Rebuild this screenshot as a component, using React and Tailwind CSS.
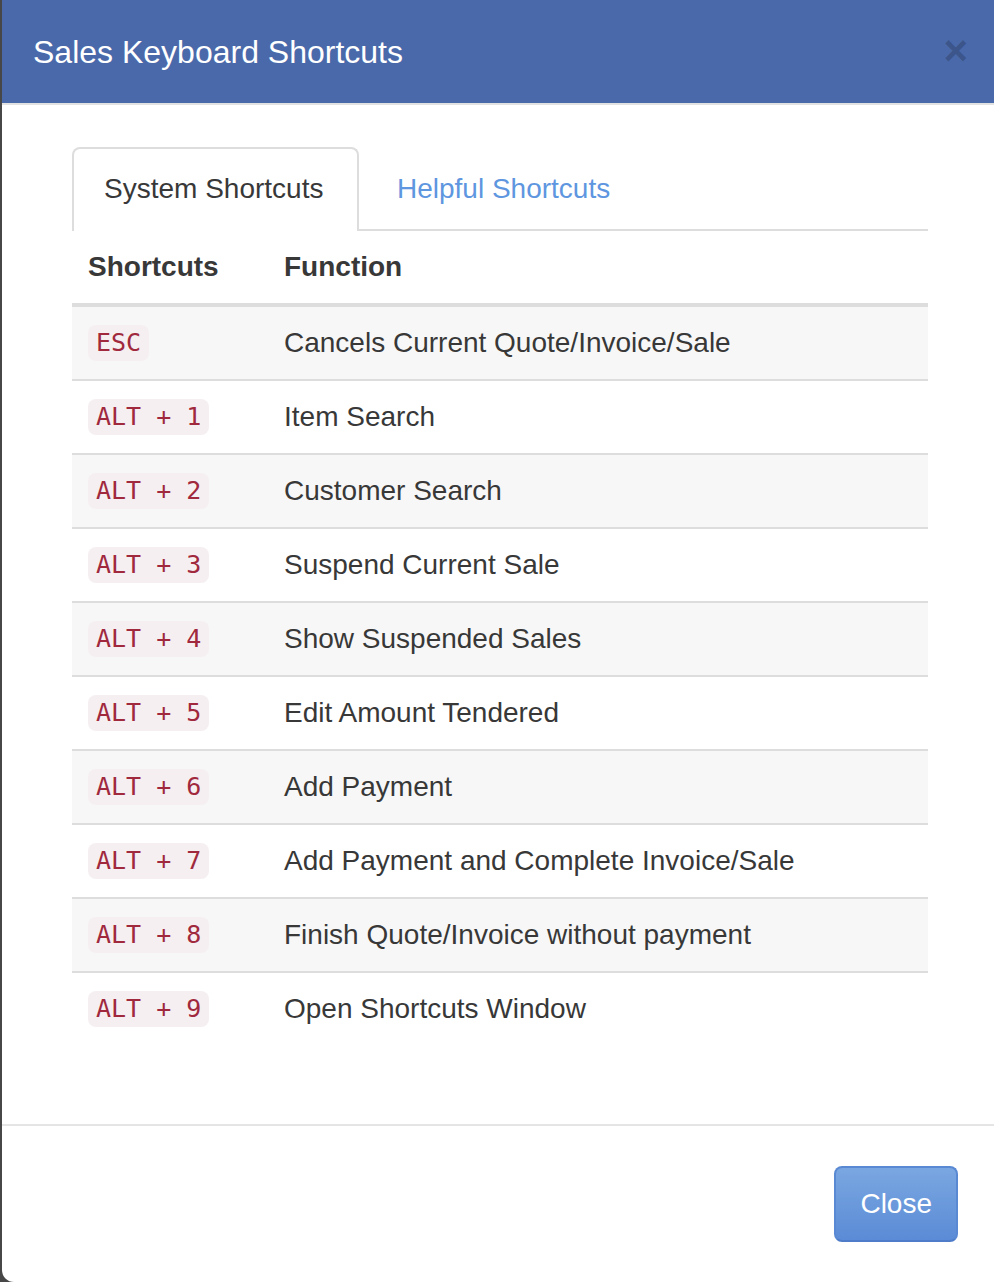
const shortcuts = [
    { keys: 'ESC', label: 'Cancels Current Quote/Invoice/Sale' },
    { keys: 'ALT + 1', label: 'Item Search' },
    { keys: 'ALT + 2', label: 'Customer Search' },
    { keys: 'ALT + 3', label: 'Suspend Current Sale' },
    { keys: 'ALT + 4', label: 'Show Suspended Sales' },
    { keys: 'ALT + 5', label: 'Edit Amount Tendered' },
    { keys: 'ALT + 6', label: 'Add Payment' },
    { keys: 'ALT + 7', label: 'Add Payment and Complete Invoice/Sale' },
    { keys: 'ALT + 8', label: 'Finish Quote/Invoice without payment' },
    { keys: 'ALT + 9', label: 'Open Shortcuts Window' },
];

const App = () => {
    return (
        <div className="w-[994px] h-[1282px] bg-[#474747] flex overflow-hidden font-['Liberation_Sans',Arial,sans-serif] text-[#383838]">
            <div className="ml-[2px] flex-1 bg-white rounded-bl-[12px] flex flex-col">
                {/* header */}
                <div className="h-[105px] bg-[#4a69aa] border-b-2 border-[#e2e2e2] pl-[31px] pr-[26px] flex items-center justify-between">
                    <h4 className="text-[32px] leading-[40px] text-white">Sales Keyboard Shortcuts</h4>
                    <button className="text-[42px] leading-none font-bold text-black/20 -mt-[2px]">×</button>
                </div>

                {/* body */}
                <div className="pl-[70px] pr-[66px] pt-[42px] h-[1019px]">
                    <div className="flex border-b-2 border-[#dddddd] text-[28px] leading-[40px]">
                        <div className="-mb-[2px] w-[287px] pl-[30px] pt-[20px] pb-[22px] border-2 border-b-0 border-[#dddddd] rounded-t-[8px] bg-white">
                            System Shortcuts
                        </div>
                        <div className="ml-[4px] px-[34px] pt-[22px] pb-[18px] text-[#5e96e0]">Helpful Shortcuts</div>
                    </div>

                    <div className="text-[28px] leading-[40px]">
                        <div className="grid grid-cols-[196px_1fr] border-b-4 border-[#dddddd] font-bold">
                            <div className="px-[16px] py-[16px]">Shortcuts</div>
                            <div className="px-[16px] py-[16px]">Function</div>
                        </div>
                        {shortcuts.map((s, i) => (
                            <div
                                key={i}
                                className={`grid grid-cols-[196px_1fr] items-center ${i > 0 ? 'border-t-2 border-[#dddddd]' : ''} ${i % 2 === 0 ? 'bg-[#f7f7f7]' : 'bg-white'}`}
                            >
                                <div className="px-[16px] py-[16px] flex">
                                    <code className="px-[8px] h-[36px] flex items-center rounded-[8px] bg-[#f6eff1] text-[#a0293d] text-[25px] whitespace-pre font-['DejaVu_Sans_Mono',Menlo,monospace]">
                                        {s.keys}
                                    </code>
                                </div>
                                <div className="px-[16px] py-[16px]">{s.label}</div>
                            </div>
                        ))}
                    </div>
                </div>

                {/* footer */}
                <div className="border-t-2 border-[#e5e5e5] pt-[40px] pr-[36px] flex justify-end">
                    <button className="h-[76px] px-[24px] rounded-[8px] border-2 border-[#5a89d3] border-b-[#4e7cc8] bg-gradient-to-b from-[#7aa7e1] to-[#5b8bd6] text-white text-[28px] leading-[40px]">
                        Close
                    </button>
                </div>
            </div>
        </div>
    );
};

export default App;
